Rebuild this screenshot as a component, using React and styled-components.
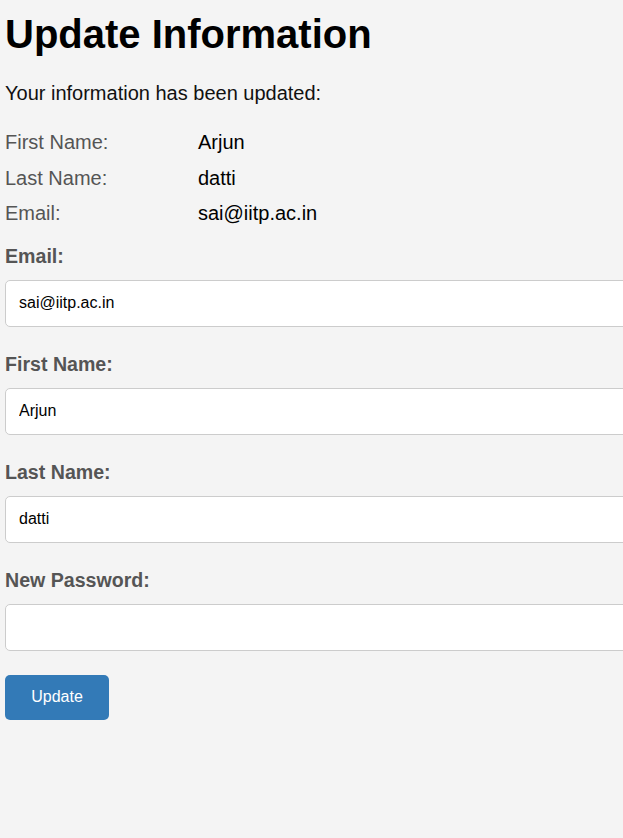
import React from "react";
import styled, { createGlobalStyle } from "styled-components";

const GlobalStyle = createGlobalStyle`
  html {
    overflow-x: hidden;
  }
  body {
    margin: 0;
    background: #f4f4f4;
    font-family: "Liberation Sans", Arial, sans-serif;
    overflow-x: hidden;
  }
`;

export default function App() {
  const info = [
    ["First Name:", "Arjun"],
    ["Last Name:", "datti"],
    ["Email:", "sai@iitp.ac.in"],
  ];
  const fields = [
    ["Email:", "sai@iitp.ac.in", "email"],
    ["First Name:", "Arjun", "text"],
    ["Last Name:", "datti", "text"],
    ["New Password:", "", "password"],
  ];

  return (
    <>
      <GlobalStyle />
      <Page>
        <Title>Update Information</Title>
        <Message>Your information has been updated:</Message>
        <InfoList>
          {info.map(([label, value]) => (
            <InfoRow key={label}>
              <InfoLabel>{label}</InfoLabel>
              <InfoValue>{value}</InfoValue>
            </InfoRow>
          ))}
        </InfoList>
        <Form onSubmit={(e) => e.preventDefault()}>
          {fields.map(([label, value, type]) => (
            <Field key={label}>
              <FieldLabel>{label}</FieldLabel>
              <Input type={type} defaultValue={value} />
            </Field>
          ))}
          <SubmitBtn type="submit">Update</SubmitBtn>
        </Form>
      </Page>
    </>
  );
}

const Page = styled.div`
  padding: 12px 5px 40px;
`;

const Title = styled.h1`
  margin: 0;
  color: #000;
  font-size: 40px;
  font-weight: bold;
  line-height: 45px;
`;

const Message = styled.p`
  margin: 25px 0 0;
  color: #111;
  font-size: 20px;
  line-height: 23px;
`;

const InfoList = styled.div`
  display: flex;
  flex-direction: column;
  margin-top: 26px;
`;

const InfoRow = styled.div`
  display: grid;
  grid-template-columns: 193px 1fr;
  height: 35.5px;
  font-size: 20px;
  line-height: 23px;
`;

const InfoLabel = styled.span`
  color: #555;
`;

const InfoValue = styled.span`
  color: #000;
`;

const Form = styled.form`
  display: flex;
  flex-direction: column;
  margin-top: 7px;
`;

const Field = styled.div`
  display: flex;
  flex-direction: column;
  margin-bottom: 26px;
`;

const FieldLabel = styled.label`
  color: #555;
  font-size: 19.6px;
  font-weight: bold;
  line-height: 23px;
  margin-bottom: 12px;
`;

const Input = styled.input`
  box-sizing: border-box;
  width: calc(100% + 30px);
  height: 47px;
  padding: 0 13px;
  border: 1px solid #ccc;
  border-radius: 5px;
  background: #fff;
  color: #000;
  font-family: "Liberation Sans", Arial, sans-serif;
  font-size: 16px;
  outline: none;
`;

const SubmitBtn = styled.button`
  align-self: flex-start;
  width: 104px;
  height: 45px;
  margin-top: -2px;
  border: none;
  border-radius: 5px;
  background: #337ab7;
  color: #fff;
  font-family: "Liberation Sans", Arial, sans-serif;
  font-size: 16px;
  cursor: pointer;
`;
